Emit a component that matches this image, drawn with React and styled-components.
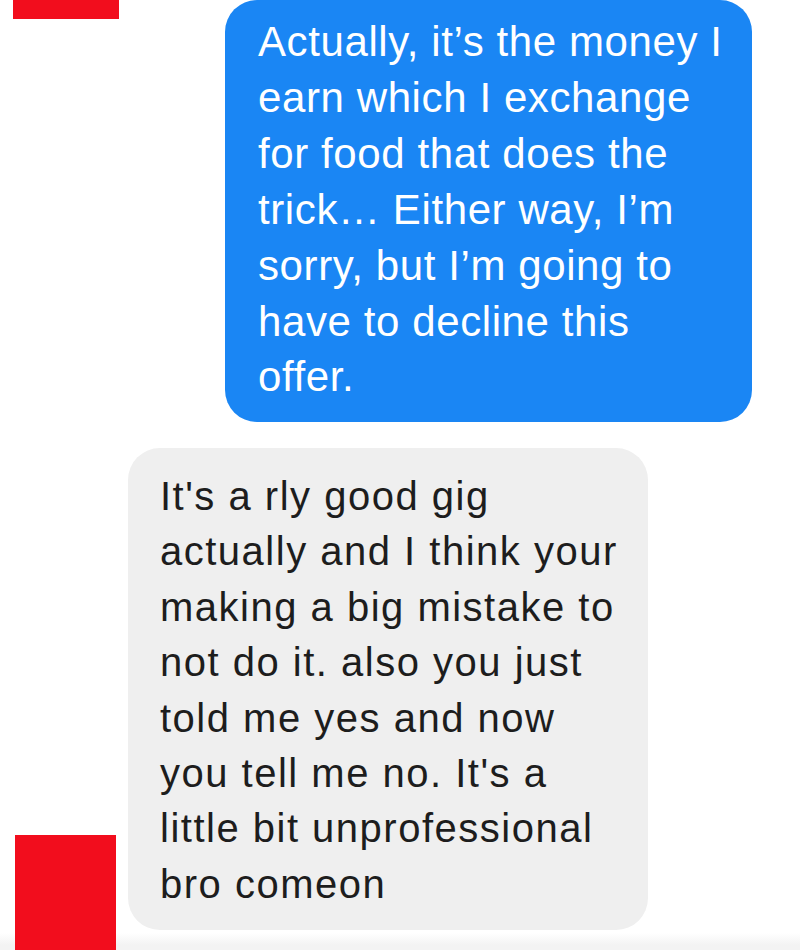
import React from 'react'
import styled, { createGlobalStyle } from 'styled-components'

const GlobalStyle = createGlobalStyle`
  html, body {
    margin: 0;
    padding: 0;
    background: #ffffff;
  }
  body {
    overflow: hidden;
  }
`;

const sent = [
  'Actually, it\u2019s the money I',
  'earn which I exchange',
  'for food that does the',
  'trick\u2026 Either way, I\u2019m',
  'sorry, but I\u2019m going to',
  'have to decline this',
  'offer.',
];

const received = [
  "It's a rly good gig",
  'actually and I think your',
  'making a big mistake to',
  'not do it. also you just',
  'told me yes and now',
  "you tell me no. It's a",
  'little bit unprofessional',
  'bro comeon',
];

export default function App() {
  return (
    <>
      <GlobalStyle />
      <Thread>
        <Row $align="flex-start">
          <Redaction $width={106} $height={19} $left={13} />
          <Bubble $variant="sent">
            {sent.map((line, i) => <Line key={i} $lh={55.9}>{line}</Line>)}
          </Bubble>
        </Row>
        <Row $align="flex-end">
          <Redaction $width={101} $height={115} $left={15} />
          <Bubble $variant="received">
            {received.map((line, i) => <Line key={i} $lh={55.4}>{line}</Line>)}
          </Bubble>
        </Row>
      </Thread>
    </>
  )
}

const Thread = styled.div`
    width: 800px;
    height: 950px;
    display: flex;
    flex-direction: column;
    gap: 26px;
    background: linear-gradient(to bottom, #ffffff 933px, #f3f3f3 945px, #f3f3f3 100%);
`;

const Row = styled.div`
    display: flex;
    align-items: ${p => p.$align};
`;

const Redaction = styled.div`
    flex: none;
    width: ${p => p.$width}px;
    height: ${p => p.$height}px;
    margin-left: ${p => p.$left}px;
    background: #f20d1d;
`;

const Bubble = styled.div`
    box-sizing: border-box;
    border-radius: 32px;
    font-family: "Liberation Sans", Arial, sans-serif;
    ${p => p.$variant === 'sent' ? `
        margin-left: auto;
        margin-right: 48px;
        width: 527px;
        height: 422px;
        padding: 14px 0 0 33px;
        background: #1a86f4;
        color: #ffffff;
        font-size: 42px;
        letter-spacing: 0.6px;
    ` : `
        margin-left: 12px;
        margin-bottom: 20px;
        width: 520px;
        height: 482px;
        padding: 21px 0 0 32px;
        background: #efefef;
        color: #1d1d1d;
        font-size: 40px;
        letter-spacing: 1.5px;
    `}
`;

const Line = styled.div`
    line-height: ${p => p.$lh}px;
    white-space: nowrap;
`;
